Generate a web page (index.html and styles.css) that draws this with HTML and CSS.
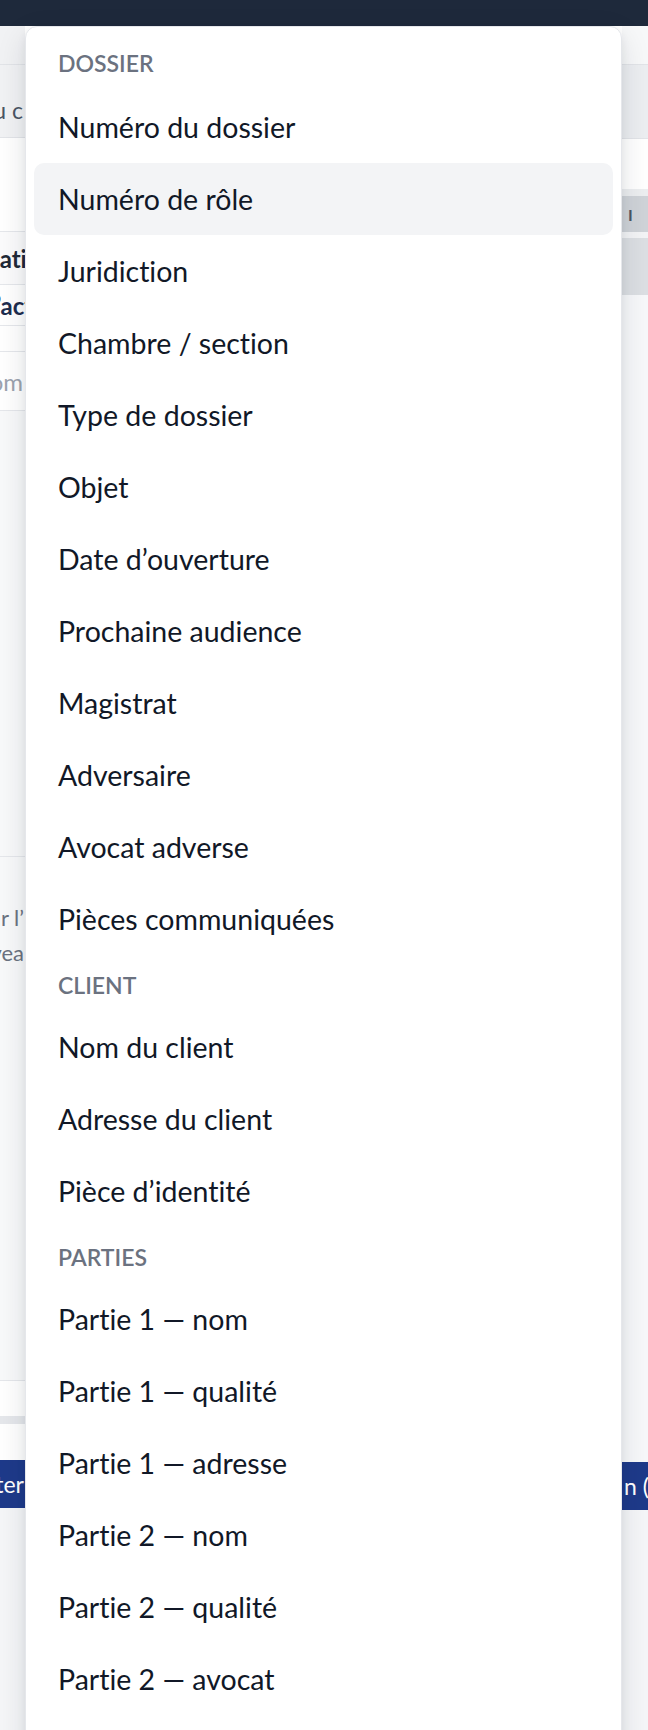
FILE: index.html
```html
<!DOCTYPE html>
<html lang="fr">
<head>
<meta charset="utf-8">
<title>Champs de fusion</title>
<link rel="stylesheet" href="styles.css">
</head>
<body>
<div class="topbar"></div>
<div class="page">
  <div class="col left">
    <div class="l1"></div>
    <div class="l2 cut"><span class="muted">Informations du c</span></div>
    <div class="l3"></div>
    <div class="l4 cut"><span class="strong over1">Désignation</span></div>
    <div class="l5 cut"><span class="strong navy over2">Type d’acte</span></div>
    <div class="l6"></div>
    <div class="l7 cut"><span class="placeholder">Saisir le nom</span></div>
    <div class="l8"></div>
    <div class="l9">
      <div class="cut"><span class="help">Cliquer sur l’</span></div>
      <div class="cut"><span class="help">un nouvea</span></div>
    </div>
    <div class="l10"></div>
    <div class="l11"></div>
    <div class="l12"></div>
    <div class="l13 cut btn"><span>Ajouter</span></div>
    <div class="l14"></div>
  </div>
  <div class="col mid"></div>
  <div class="col right">
    <div class="r1"></div>
    <div class="r2"></div>
    <div class="r3"></div>
    <div class="r4"></div>
    <div class="r5"><span class="caret">I</span></div>
    <div class="r6"></div>
    <div class="r7"></div>
    <div class="r8"></div>
    <div class="r9 btn"><span>n (1)</span></div>
    <div class="r10"></div>
  </div>
</div>

<div class="menu" role="listbox">
  <div class="group-label first">DOSSIER</div>
  <div class="item">Numéro du dossier</div>
  <div class="item active">Numéro de rôle</div>
  <div class="item">Juridiction</div>
  <div class="item">Chambre / section</div>
  <div class="item">Type de dossier</div>
  <div class="item">Objet</div>
  <div class="item">Date d’ouverture</div>
  <div class="item">Prochaine audience</div>
  <div class="item">Magistrat</div>
  <div class="item">Adversaire</div>
  <div class="item">Avocat adverse</div>
  <div class="item">Pièces communiquées</div>
  <div class="group-label">CLIENT</div>
  <div class="item">Nom du client</div>
  <div class="item">Adresse du client</div>
  <div class="item">Pièce d’identité</div>
  <div class="group-label">PARTIES</div>
  <div class="item">Partie 1 — nom</div>
  <div class="item">Partie 1 — qualité</div>
  <div class="item">Partie 1 — adresse</div>
  <div class="item">Partie 2 — nom</div>
  <div class="item">Partie 2 — qualité</div>
  <div class="item">Partie 2 — avocat</div>
  <div class="item">Partie 2 — adresse</div>
</div>
</body>
</html>
```
FILE: styles.css
```css
html, body {
  margin: 0;
  height: 1730px;
  overflow: hidden;
}
body {
  font-family: Lato, "Noto Sans", sans-serif;
  font-variant-ligatures: none;
  background: #f6f7f9;
  position: relative;
}
.topbar {
  height: 26px;
  background: #1e293b;
}
.page {
  display: grid;
  grid-template-columns: 25px 1fr 26px;
  height: 1704px;
}
.col {
  display: flex;
  flex-direction: column;
  overflow: hidden;
}
.mid { background: #ffffff; }

/* left strip of the underlying page */
.cut {
  display: flex;
  justify-content: flex-end;
  overflow: hidden;
  white-space: nowrap;
}
.l1 { height: 38px; background: #f1f2f4; border-bottom: 1px solid #e2e4e8; }
.l2 { height: 72px; background: #f1f2f4; border-bottom: 1px solid #e2e4e8; align-items: flex-start; }
.l2 span { margin-top: 31px; margin-right: 2px; line-height: 28px; }
.l3 { height: 93px; background: #ffffff; border-bottom: 1px solid #e5e7eb; }
.l4 { height: 52px; background: #fbfbfc; border-bottom: 1px solid #e5e7eb; align-items: center; }
.l5 { height: 40px; background: #ffffff; border-bottom: 1px solid #e5e7eb; align-items: center; }
.l6 { height: 25px; background: #ffffff; border-bottom: 1px solid #e5e7eb; }
.l7 { height: 58px; background: #ffffff; border-bottom: 1px solid #e5e7eb; align-items: center; }
.l8 { height: 445px; background: #f8f9fa; border-bottom: 1px solid #e5e7eb; }
.l9 { height: 524px; background: #f8f9fa; border-bottom: 1px solid #e5e7eb; padding-top: 43px; box-sizing: border-box; }
.l10 { height: 35px; background: #ffffff; }
.l11 { height: 8px; background: #e5e7eb; }
.l12 { height: 36px; background: #ffffff; }
.l13 { height: 48px; align-items: center; }
.l14 { flex: 1; background: #f5f6f8; }

.muted { color: #4b5563; font-size: 23px; }
.strong { font-weight: 700; font-size: 24px; color: #1f2937; }
.navy { color: #1e2d4f; }
.over1 { margin-right: -29px; }
.over2 { margin-right: -21px; }
.placeholder { color: #9ca3af; font-size: 24px; margin-right: 2px; }
.help { color: #6b7280; font-size: 22px; line-height: 35px; margin-right: 1px; }

.btn {
  background: #1e3a8a;
  color: #ffffff;
  font-size: 23px;
}
.l13 span { margin-right: 1px; }

/* right strip of the underlying page */
.r1 { height: 38px; background: #f7f8f9; border-bottom: 1px solid #e2e4e8; }
.r2 { height: 73px; background: #eceef1; border-bottom: 1px solid #e2e4e8; }
.r3 { height: 50px; background: #ffffff; }
.r4 { height: 7px; background: #eceef0; }
.r5 { height: 36px; background: #cfd3d8; display: flex; align-items: center; padding-left: 6px; }
.caret { color: #4b5563; font-size: 16px; font-weight: 700; }
.r6 { height: 6px; background: #f3f4f6; }
.r7 { height: 57px; background: #dcdfe3; }
.r8 { height: 1167px; background: #f7f8fa; }
.r9 { height: 48px; display: flex; align-items: center; padding-left: 2px; white-space: nowrap; }
.r10 { flex: 1; background: #f5f6f8; }

/* dropdown menu */
.menu {
  position: absolute;
  top: 26px;
  left: 25px;
  width: 597px;
  box-sizing: border-box;
  background: #ffffff;
  border: 1px solid #e5e7eb;
  border-radius: 12px;
  padding: 8px;
  box-shadow: 0 10px 30px rgba(15, 23, 42, 0.12), 0 4px 10px rgba(15, 23, 42, 0.06);
}
.group-label {
  padding: 14px 24px 10px;
  line-height: 32px;
  font-size: 23px;
  font-weight: 600;
  color: #6b7280;
}
.group-label.first {
  padding-top: 12px;
  padding-bottom: 12px;
}
.item {
  height: 72px;
  padding: 0 24px;
  display: flex;
  align-items: center;
  font-size: 28.5px;
  color: #111827;
  border-radius: 10px;
  white-space: nowrap;
}
.item.active {
  background: #f3f4f6;
}
```
